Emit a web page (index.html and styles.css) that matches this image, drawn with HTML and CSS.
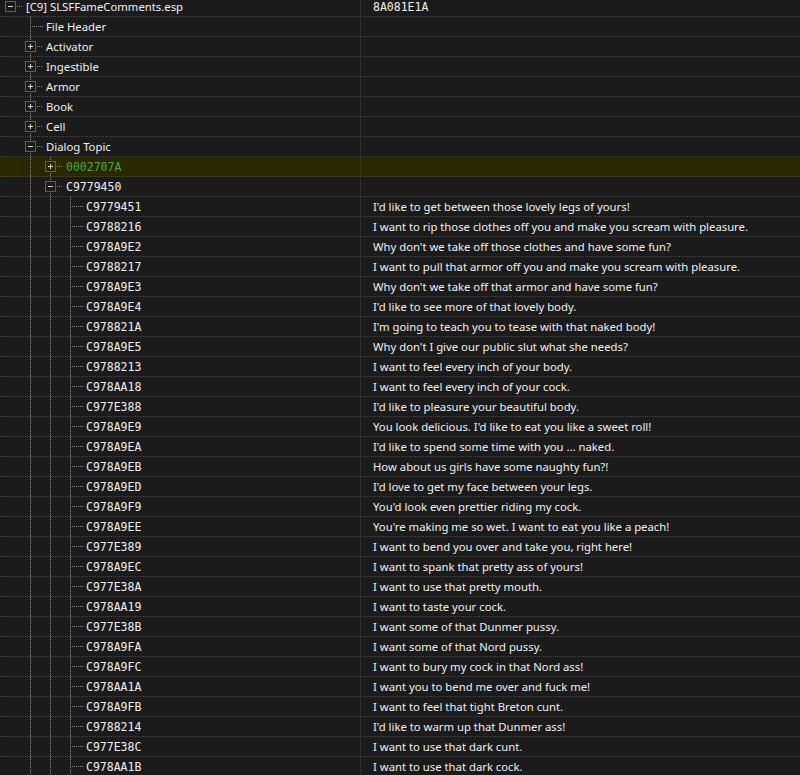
FILE: index.html
```html
<!DOCTYPE html>
<html lang="en">
<head>
    <meta charset="UTF-8">
    <title>SLSFFameComments.esp</title>
    <link rel="stylesheet" href="styles.css">
</head>
<body>
    <div class="tree-view">
        <!-- plugin root -->
        <div class="row">
            <div class="node"><i class="c open"></i><span class="name">[C9] SLSFFameComments.esp</span></div>
            <div class="val code">8A081E1A</div>
        </div>

        <!-- groups -->
        <div class="row">
            <div class="node"><i class="g"></i><i class="c leaf"></i><span class="name">File Header</span></div>
            <div class="val"></div>
        </div>
        <div class="row">
            <div class="node"><i class="g"></i><i class="c closed"></i><span class="name">Activator</span></div>
            <div class="val"></div>
        </div>
        <div class="row">
            <div class="node"><i class="g"></i><i class="c closed"></i><span class="name">Ingestible</span></div>
            <div class="val"></div>
        </div>
        <div class="row">
            <div class="node"><i class="g"></i><i class="c closed"></i><span class="name">Armor</span></div>
            <div class="val"></div>
        </div>
        <div class="row">
            <div class="node"><i class="g"></i><i class="c closed"></i><span class="name">Book</span></div>
            <div class="val"></div>
        </div>
        <div class="row">
            <div class="node"><i class="g"></i><i class="c closed"></i><span class="name">Cell</span></div>
            <div class="val"></div>
        </div>
        <div class="row">
            <div class="node"><i class="g"></i><i class="c open"></i><span class="name">Dialog Topic</span></div>
            <div class="val"></div>
        </div>

        <!-- dialog topics -->
        <div class="row hl">
            <div class="node"><i class="g"></i><i class="g v"></i><i class="c closed"></i><span class="name code green">0002707A</span></div>
            <div class="val"></div>
        </div>
        <div class="row">
            <div class="node"><i class="g"></i><i class="g v"></i><i class="c open"></i><span class="name code">C9779450</span></div>
            <div class="val"></div>
        </div>

        <!-- responses -->
        <div class="row"><div class="node"><i class="g"></i><i class="g v"></i><i class="g v"></i><i class="c leaf"></i><span class="name code">C9779451</span></div><div class="val">I'd like to get between those lovely legs of yours!</div></div>
        <div class="row"><div class="node"><i class="g"></i><i class="g v"></i><i class="g v"></i><i class="c leaf"></i><span class="name code">C9788216</span></div><div class="val">I want to rip those clothes off you and make you scream with pleasure.</div></div>
        <div class="row"><div class="node"><i class="g"></i><i class="g v"></i><i class="g v"></i><i class="c leaf"></i><span class="name code">C978A9E2</span></div><div class="val">Why don't we take off those clothes and have some fun?</div></div>
        <div class="row"><div class="node"><i class="g"></i><i class="g v"></i><i class="g v"></i><i class="c leaf"></i><span class="name code">C9788217</span></div><div class="val">I want to pull that armor off you and make you scream with pleasure.</div></div>
        <div class="row"><div class="node"><i class="g"></i><i class="g v"></i><i class="g v"></i><i class="c leaf"></i><span class="name code">C978A9E3</span></div><div class="val">Why don't we take off that armor and have some fun?</div></div>
        <div class="row"><div class="node"><i class="g"></i><i class="g v"></i><i class="g v"></i><i class="c leaf"></i><span class="name code">C978A9E4</span></div><div class="val">I'd like to see more of that lovely body.</div></div>
        <div class="row"><div class="node"><i class="g"></i><i class="g v"></i><i class="g v"></i><i class="c leaf"></i><span class="name code">C978821A</span></div><div class="val">I'm going to teach you to tease with that naked body!</div></div>
        <div class="row"><div class="node"><i class="g"></i><i class="g v"></i><i class="g v"></i><i class="c leaf"></i><span class="name code">C978A9E5</span></div><div class="val">Why don't I give our public slut what she needs?</div></div>
        <div class="row"><div class="node"><i class="g"></i><i class="g v"></i><i class="g v"></i><i class="c leaf"></i><span class="name code">C9788213</span></div><div class="val">I want to feel every inch of your body.</div></div>
        <div class="row"><div class="node"><i class="g"></i><i class="g v"></i><i class="g v"></i><i class="c leaf"></i><span class="name code">C978AA18</span></div><div class="val">I want to feel every inch of your cock.</div></div>
        <div class="row"><div class="node"><i class="g"></i><i class="g v"></i><i class="g v"></i><i class="c leaf"></i><span class="name code">C977E388</span></div><div class="val">I'd like to pleasure your beautiful body.</div></div>
        <div class="row"><div class="node"><i class="g"></i><i class="g v"></i><i class="g v"></i><i class="c leaf"></i><span class="name code">C978A9E9</span></div><div class="val">You look delicious. I'd like to eat you like a sweet roll!</div></div>
        <div class="row"><div class="node"><i class="g"></i><i class="g v"></i><i class="g v"></i><i class="c leaf"></i><span class="name code">C978A9EA</span></div><div class="val">I'd like to spend some time with you ... naked.</div></div>
        <div class="row"><div class="node"><i class="g"></i><i class="g v"></i><i class="g v"></i><i class="c leaf"></i><span class="name code">C978A9EB</span></div><div class="val">How about us girls have some naughty fun?!</div></div>
        <div class="row"><div class="node"><i class="g"></i><i class="g v"></i><i class="g v"></i><i class="c leaf"></i><span class="name code">C978A9ED</span></div><div class="val">I'd love to get my face between your legs.</div></div>
        <div class="row"><div class="node"><i class="g"></i><i class="g v"></i><i class="g v"></i><i class="c leaf"></i><span class="name code">C978A9F9</span></div><div class="val">You'd look even prettier riding my cock.</div></div>
        <div class="row"><div class="node"><i class="g"></i><i class="g v"></i><i class="g v"></i><i class="c leaf"></i><span class="name code">C978A9EE</span></div><div class="val">You're making me so wet. I want to eat you like a peach!</div></div>
        <div class="row"><div class="node"><i class="g"></i><i class="g v"></i><i class="g v"></i><i class="c leaf"></i><span class="name code">C977E389</span></div><div class="val">I want to bend you over and take you, right here!</div></div>
        <div class="row"><div class="node"><i class="g"></i><i class="g v"></i><i class="g v"></i><i class="c leaf"></i><span class="name code">C978A9EC</span></div><div class="val">I want to spank that pretty ass of yours!</div></div>
        <div class="row"><div class="node"><i class="g"></i><i class="g v"></i><i class="g v"></i><i class="c leaf"></i><span class="name code">C977E38A</span></div><div class="val">I want to use that pretty mouth.</div></div>
        <div class="row"><div class="node"><i class="g"></i><i class="g v"></i><i class="g v"></i><i class="c leaf"></i><span class="name code">C978AA19</span></div><div class="val">I want to taste your cock.</div></div>
        <div class="row"><div class="node"><i class="g"></i><i class="g v"></i><i class="g v"></i><i class="c leaf"></i><span class="name code">C977E38B</span></div><div class="val">I want some of that Dunmer pussy.</div></div>
        <div class="row"><div class="node"><i class="g"></i><i class="g v"></i><i class="g v"></i><i class="c leaf"></i><span class="name code">C978A9FA</span></div><div class="val">I want some of that Nord pussy.</div></div>
        <div class="row"><div class="node"><i class="g"></i><i class="g v"></i><i class="g v"></i><i class="c leaf"></i><span class="name code">C978A9FC</span></div><div class="val">I want to bury my cock in that Nord ass!</div></div>
        <div class="row"><div class="node"><i class="g"></i><i class="g v"></i><i class="g v"></i><i class="c leaf"></i><span class="name code">C978AA1A</span></div><div class="val">I want you to bend me over and fuck me!</div></div>
        <div class="row"><div class="node"><i class="g"></i><i class="g v"></i><i class="g v"></i><i class="c leaf"></i><span class="name code">C978A9FB</span></div><div class="val">I want to feel that tight Breton cunt.</div></div>
        <div class="row"><div class="node"><i class="g"></i><i class="g v"></i><i class="g v"></i><i class="c leaf"></i><span class="name code">C9788214</span></div><div class="val">I'd like to warm up that Dunmer ass!</div></div>
        <div class="row"><div class="node"><i class="g"></i><i class="g v"></i><i class="g v"></i><i class="c leaf"></i><span class="name code">C977E38C</span></div><div class="val">I want to use that dark cunt.</div></div>
        <div class="row"><div class="node"><i class="g"></i><i class="g v"></i><i class="g v"></i><i class="c leaf"></i><span class="name code">C978AA1B</span></div><div class="val">I want to use that dark cock.</div></div>
    </div>
</body>
</html>
```

FILE: styles.css
```css
body {
    margin: 0;
    background-color: #1b1b1b;
    color: #f0f0f0;
    font-family: 'Noto Sans', sans-serif;
    font-size: 11.3px;
    overflow: hidden;
}

.tree-view {
    margin-top: -3px;
}

.row {
    display: flex;
    height: 19px;
    border-bottom: 1px dotted #454545;
}

.row.hl {
    background-color: #2a2800;
}

.node {
    display: flex;
    align-items: center;
    width: 360px;
    flex-shrink: 0;
}

.val {
    flex: 1;
    display: flex;
    align-items: center;
    padding-left: 12px;
    border-left: 1px dotted #454545;
    white-space: nowrap;
}

.name {
    margin-left: 2px;
    white-space: nowrap;
}

.code {
    font-family: 'DejaVu Sans Mono', monospace;
    font-size: 11.5px;
}

.green {
    color: #3fae3f;
}

/* tree guides */
.g, .c {
    display: block;
    height: 100%;
    flex-shrink: 0;
}

.g {
    width: 20px;
}

.g.v {
    background: repeating-linear-gradient(#8a8a8a 0 1px, transparent 1px 2px) 10px 0 / 1px 100% no-repeat;
}

.c {
    width: 24px;
    display: flex;
    align-items: center;
    padding-left: 5px;
    box-sizing: border-box;
}

.c.leaf {
    background:
        repeating-linear-gradient(to right, #8a8a8a 0 1px, transparent 1px 2px) 12px 9px / 11px 1px no-repeat,
        repeating-linear-gradient(#8a8a8a 0 1px, transparent 1px 2px) 10px 0 / 1px 100% no-repeat;
}

.c.open, .c.closed {
    background:
        repeating-linear-gradient(to right, #8a8a8a 0 1px, transparent 1px 2px) 17px 9px / 6px 1px no-repeat,
        repeating-linear-gradient(#8a8a8a 0 1px, transparent 1px 2px) 10px 0 / 1px 100% no-repeat;
}

.c.open::before, .c.closed::before {
    content: '';
    display: block;
    width: 9px;
    height: 9px;
    border: 1px solid #5e5e5e;
    background:
        linear-gradient(#d8d8d8, #d8d8d8) center / 5px 1px no-repeat,
        #1b1b1b;
}

.c.closed::before {
    background:
        linear-gradient(#d8d8d8, #d8d8d8) center / 5px 1px no-repeat,
        linear-gradient(#d8d8d8, #d8d8d8) center / 1px 5px no-repeat,
        #1b1b1b;
}

.hl .c.closed::before {
    background:
        linear-gradient(#d8d8d8, #d8d8d8) center / 5px 1px no-repeat,
        linear-gradient(#d8d8d8, #d8d8d8) center / 1px 5px no-repeat,
        #2a2800;
}

.row:first-child .c {
    background: repeating-linear-gradient(to right, #8a8a8a 0 1px, transparent 1px 2px) 17px 9px / 6px 1px no-repeat;
}
```
